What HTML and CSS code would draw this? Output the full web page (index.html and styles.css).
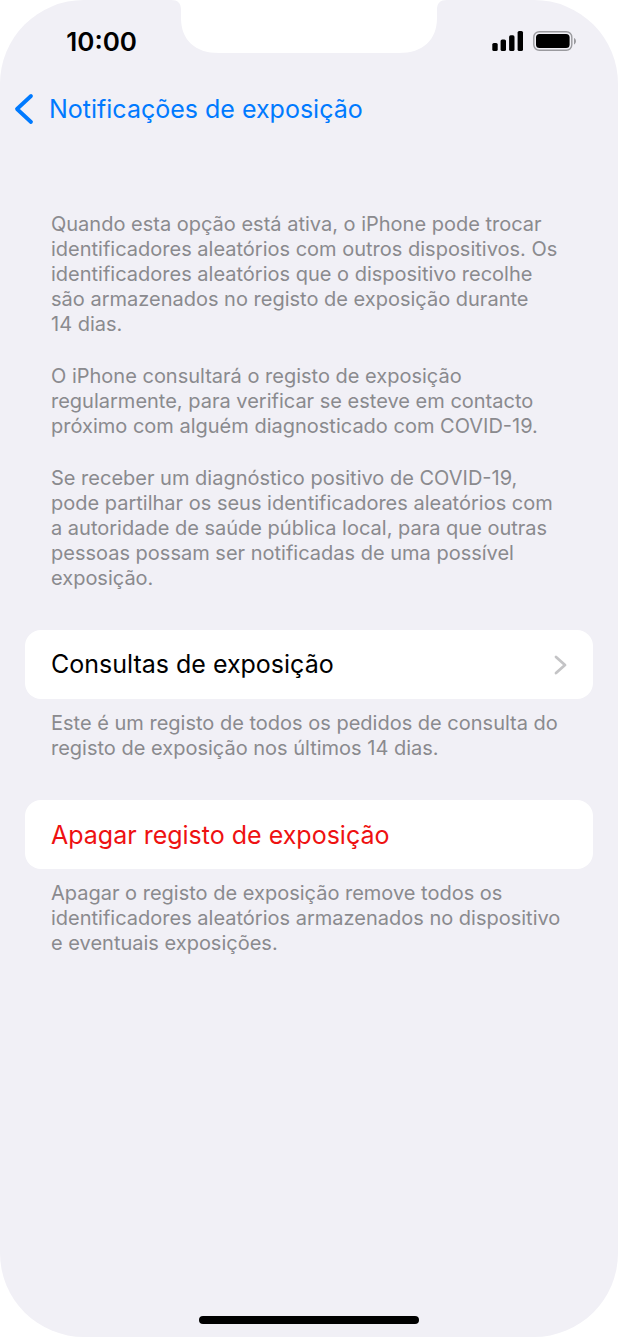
FILE: index.html
```html
<!DOCTYPE html>
<html lang="pt">
<head>
  <meta charset="UTF-8">
  <meta name="viewport" content="width=device-width, initial-scale=1.0">
  <title>Notificações de exposição</title>
  <link rel="stylesheet" href="styles.css">
</head>
<body>
  <div class="screen">

    <!-- Status bar -->
    <header class="status-bar">
      <time class="clock">10:00</time>
      <svg class="notch" width="276" height="53" viewBox="0 0 276 53" aria-hidden="true">
        <path d="M0 0C7 0 10 3 10 10V18C10 40 24 53 48 53H228C252 53 266 40 266 18V10C266 3 269 0 276 0Z" fill="#fff"/>
      </svg>
      <div class="status-icons">
        <svg width="32" height="20" viewBox="0 0 32 20" aria-hidden="true">
          <rect x="0.300" y="12" width="5.400" height="8" rx="1.600"/>
          <rect x="8.600" y="8.400" width="5.400" height="11.600" rx="1.600"/>
          <rect x="17.100" y="4.300" width="5.400" height="15.700" rx="1.600"/>
          <rect x="25.600" y="0" width="5.400" height="20" rx="1.600"/>
        </svg>
        <svg width="44" height="20" viewBox="0 0 44 20" aria-hidden="true">
          <rect x="0.800" y="0.700" width="38" height="18.600" rx="5.500" fill="none" stroke="#9a9a9e" stroke-width="1.400"/>
          <rect x="3" y="3" width="33.600" height="14" rx="3.500"/>
          <path d="M41 7C43.600 8 43.600 12.400 41 13.400Z" fill="#9a9a9e"/>
        </svg>
      </div>
    </header>

    <!-- Navigation -->
    <nav class="nav">
      <a href="#" class="back">
        <svg width="20" height="32" viewBox="0 0 20 32" fill="none" stroke="currentColor" stroke-width="3.800" stroke-linecap="round" stroke-linejoin="round" aria-hidden="true">
          <path d="M17 3L3 16L17 29"/>
        </svg>
        <span>Notificações de exposição</span>
      </a>
    </nav>

    <main class="content">
      <section class="intro">
        <p>Quando esta opção está ativa, o iPhone pode trocar identificadores aleatórios com outros dispositivos. Os identificadores aleatórios que o dispositivo recolhe são armazenados no registo de exposição durante 14&nbsp;dias.</p>
        <p>O iPhone consultará o registo de exposição regularmente, para verificar se esteve em contacto próximo com alguém diagnosticado com COVID-19.</p>
        <p>Se receber um diagnóstico positivo de COVID-19, pode partilhar os seus identificadores aleatórios com a&nbsp;autoridade de saúde pública local, para que outras pessoas possam ser notificadas de uma possível exposição.</p>
      </section>

      <section class="group">
        <a href="#" class="row">
          <span>Consultas de exposição</span>
          <svg width="13" height="20" viewBox="0 0 13 20" fill="none" stroke="#c4c4c6" stroke-width="2.800" stroke-linecap="round" stroke-linejoin="round" aria-hidden="true">
            <path d="M2 2L11 10L2 18"/>
          </svg>
        </a>
        <p class="note">Este é um registo de todos os pedidos de consulta do registo de exposição nos últimos 14 dias.</p>
      </section>

      <section class="group">
        <button type="button" class="row row-danger">Apagar registo de exposição</button>
        <p class="note">Apagar o registo de exposição remove todos os identificadores aleatórios armazenados no dispositivo e&nbsp;eventuais exposições.</p>
      </section>
    </main>

    <div class="home-indicator"></div>
  </div>
</body>
</html>
```
FILE: styles.css
```css
/* Global styling */
* { box-sizing: border-box; }
body { margin: 0; background-color: #fff; font-family: Inter, "Liberation Sans", sans-serif; font-size: 20px; line-height: 25px; color: #8a8a8e; }
p { margin: 0; }

.screen { display: flex; flex-direction: column; min-height: 100vh; background-color: #f1f0f6; border-radius: 84px; overflow: hidden; }

/* Status bar */
.status-bar { display: grid; grid-template-columns: 1fr 276px 1fr; height: 82px; color: #000; }
.clock { justify-self: end; padding-top: 26px; margin-right: 34px; font-size: 26px; line-height: 32px; font-weight: 600; }
.notch { display: block; }
.status-icons { display: flex; gap: 9px; padding-top: 31px; padding-left: 45px; }

/* Navigation */
.nav { padding: 0 14px; }
.back { display: inline-flex; align-items: center; gap: 15px; height: 54px; color: #007aff; font-size: 25px; text-decoration: none; }

/* Content */
.content { flex: 1; padding: 76px 25px 0; }
.intro { display: flex; flex-direction: column; gap: 27px; padding: 0 26px; }
.group { margin-top: 39px; }
.row { display: flex; align-items: center; justify-content: space-between; width: 100%; height: 69px; padding: 0 26px; border: none; border-radius: 16px; background-color: #fff; color: #000; font-family: inherit; font-size: 25px; text-align: left; text-decoration: none; cursor: pointer; }
.row-danger { color: #ee1111; }
.note { padding: 12px 26px 0; }

.home-indicator { width: 220px; height: 8px; margin: 0 auto 13px; border-radius: 4px; background-color: #000; }
```
